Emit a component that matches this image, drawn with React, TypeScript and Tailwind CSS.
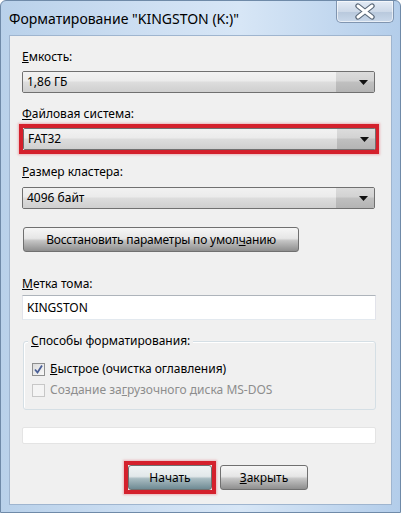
import React from "react";

const font = { fontFamily: '"Noto Sans", "Open Sans", "DejaVu Sans", sans-serif' };

function Combo({ value }: { value: string }) {
  return (
    <div className="flex h-[22px] w-[353px] rounded-[2px] border border-[#707070] overflow-hidden">
      <div className="flex flex-1 items-center pl-[4px] text-[12px] text-black bg-[linear-gradient(#f2f2f2_0%,#ebebeb_45%,#dddddd_50%,#cfcfcf_100%)]">
        {value}
      </div>
      <div className="flex w-[38px] items-center justify-end pr-[6px] bg-[linear-gradient(#dcdcdc_0%,#d2d2d2_45%,#c0c0c0_50%,#b4b4b4_100%)]">
        <svg width="9" height="5" viewBox="0 0 9 5">
          <path d="M0 0 H9 L4.5 5 Z" fill="#111" />
        </svg>
      </div>
    </div>
  );
}

function Btn({ children, w, dark }: { children: React.ReactNode; w: string; dark?: boolean }) {
  return (
    <div
      className={`flex h-[25px] items-center justify-center rounded-[3px] border border-[#707070] text-[12px] text-black ${w} ${
        dark
          ? "bg-[linear-gradient(#f0f4f5_0%,#e2e8ea_45%,#a9bcc2_55%,#6f8b94_100%)]"
          : "bg-[linear-gradient(#f6f6f6_0%,#e6e6e6_45%,#c4c4c4_55%,#8e8e8e_100%)]"
      }`}
    >
      {children}
    </div>
  );
}

export default function App() {
  return (
    <div
      className="w-[401px] h-[513px] overflow-hidden bg-[linear-gradient(90deg,#b9d1ea_0%,#cfe0f3_40%,#d7e6f6_60%,#b3cdea_100%)] rounded-t-[6px] border border-[#6f8aa8] flex flex-col"
      style={font}
    >
      {/* title bar */}
      <div className="flex h-[34px] shrink-0 items-start justify-between">
        <div className="pl-[8px] pt-[9px] text-[14px] leading-[18px] text-black">
          Форматирование "KINGSTON (K:)"
        </div>
        <div className="mr-[6px] flex h-[22px] w-[58px] items-center justify-center rounded-b-[5px] border border-t-0 border-[#8095b0] bg-[linear-gradient(#e4ecf6_0%,#cdd9e8_50%,#b9c9dd_55%,#c9d8ea_100%)] shadow-[inset_0_0_0_1px_rgba(255,255,255,0.6)]">
          <svg width="24" height="17" viewBox="0 0 24 17">
            <path d="M5 3 L19 14 M19 3 L5 14" stroke="#5c6a7a" strokeWidth="5.4" strokeLinecap="round" />
            <path d="M5 3 L19 14 M19 3 L5 14" stroke="#ffffff" strokeWidth="3" strokeLinecap="round" />
          </svg>
        </div>
      </div>

      {/* client area */}
      <div className="mx-[8px] flex h-[470px] flex-col bg-[#f0f0f0] pl-[12px] border border-[#9fb5cf] text-[12px] text-black">
        <div className="mt-[13px] h-[16px] leading-[16px]">
          <u>Е</u>мкость:
        </div>
        <div className="mt-[6px]">
          <Combo value="1,86 ГБ" />
        </div>

        <div className="mt-[13px] h-[16px] leading-[16px]">
          <u>Ф</u>айловая система:
        </div>
        <div className="mt-[2px] ml-[-3px] w-[360px] border-[4px] border-[#d4202c] shadow-[0_0_2px_1px_rgba(230,120,130,0.5)]">
          <Combo value="FAT32" />
        </div>

        <div className="mt-[10px] h-[16px] leading-[16px]">
          <u>Р</u>азмер кластера:
        </div>
        <div className="mt-[7px]">
          <Combo value="4096 байт" />
        </div>

        <div className="mt-[18px] ml-[1px]">
          <Btn w="w-[276px]">
            <span className="tracking-[-0.2px]">
              Восстановить параметры по умол<u>ч</u>анию
            </span>
          </Btn>
        </div>

        <div className="mt-[24px] h-[16px] leading-[16px]">
          <u>М</u>етка тома:
        </div>
        <div className="mt-[3px] flex h-[25px] w-[354px] items-center border border-t-[#aeb4bb] border-x-[#e2e3ea] border-b-[#e3e9ef] bg-white pl-[4px]">
          KINGSTON
        </div>

        <div className="relative mt-[21px] ml-[1px] h-[69px] w-[353px] rounded-[3px] border border-[#d5dfe5] shadow-[inset_1px_1px_0_#ffffff]">
          <div className="absolute left-[4px] top-[-9px] bg-[#f0f0f0] px-[3px] h-[16px] leading-[16px]">
            <u>С</u>пособы форматирования:
          </div>
          <div className="mt-[19px] ml-[8px] flex items-center gap-[5px] h-[16px]">
            <div className="flex h-[13px] w-[13px] items-center justify-center border border-[#8e8f8f] bg-[linear-gradient(135deg,#dcdcdc,#f8f8f8)]">
              <svg width="11" height="11" viewBox="0 0 11 11">
                <path d="M2 5.5 L4.5 8.5 L9 1.5" stroke="#4a5f97" strokeWidth="1.8" fill="none" />
              </svg>
            </div>
            <span>
              <u>Б</u>ыстрое (очистка оглавления)
            </span>
          </div>
          <div className="mt-[5px] ml-[8px] flex items-center gap-[5px] h-[16px] text-[#8d8d8d]">
            <div className="h-[13px] w-[13px] border border-[#c7c7c7] bg-[#f4f4f4]" />
            <span>
              Создание за<u>г</u>рузочного диска MS-DOS
            </span>
          </div>
        </div>

        <div className="mt-[17px] h-[17px] w-[354px] rounded-[2px] border border-[#e4e4e4] bg-white" />

        <div className="mt-[17px] flex items-center">
          <div className="ml-[102px] border-[4px] border-[#d4202c] shadow-[0_0_2px_1px_rgba(230,120,130,0.5)]">
            <Btn w="w-[84px]" dark>
              Начать
            </Btn>
          </div>
          <div className="ml-[4px]">
            <Btn w="w-[88px]">
              <span>
                <u>З</u>акрыть
              </span>
            </Btn>
          </div>
        </div>
      </div>
    </div>
  );
}
